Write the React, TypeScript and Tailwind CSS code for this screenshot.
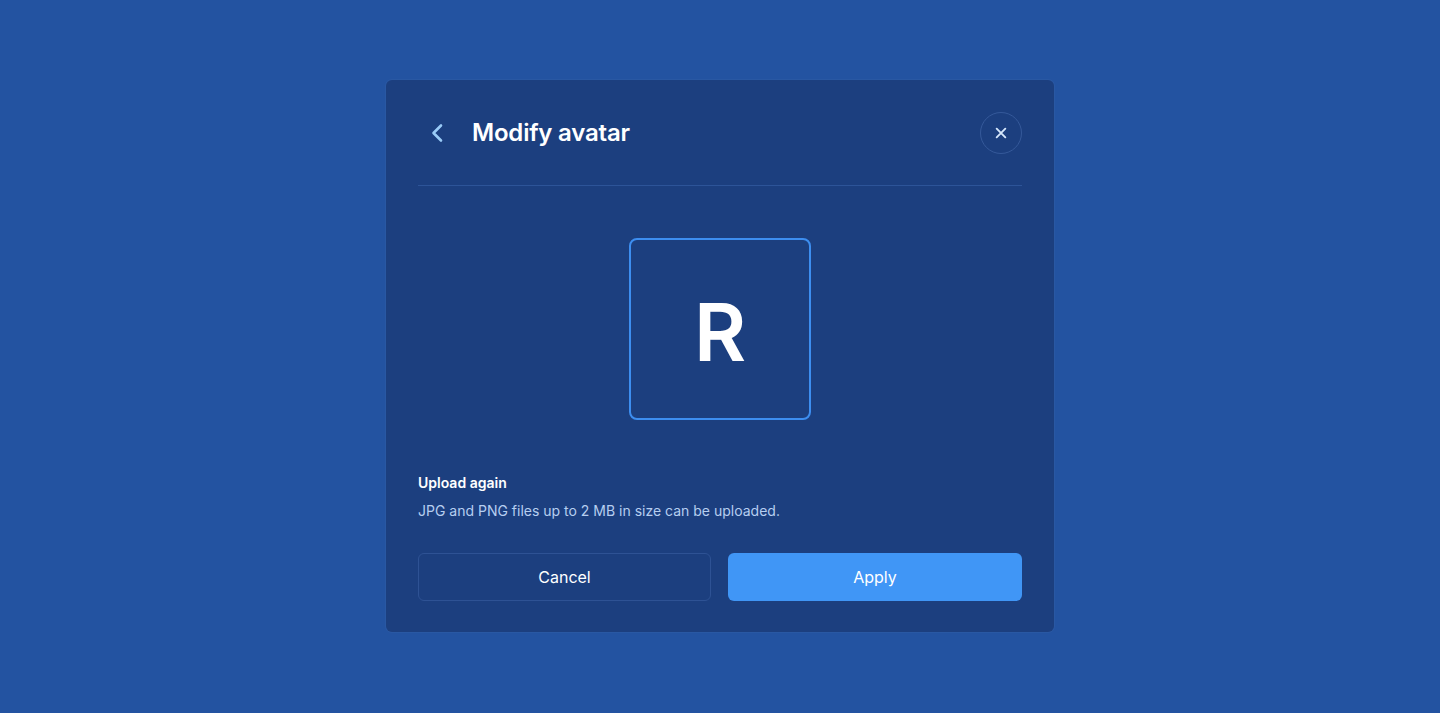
import React from "react";

export default function App() {
  return (
    <div className="w-[1440px] h-[713px] bg-[#2353a1] flex items-start justify-center pt-[80px]" style={{ fontFamily: "Inter, 'Noto Sans', sans-serif" }}>
      <div className="w-[668px] h-[552px] rounded-[6px] bg-[#1c3f7f] px-[32px] pt-[32px] pb-[31px] flex flex-col shadow-[0_0_0_1px_rgba(255,255,255,0.03)]">
        <div className="flex items-center justify-between h-[42px] shrink-0">
          <div className="flex items-center">
            <button className="w-[38px] h-[38px] flex items-center justify-center text-[#9acbf7]">
              <svg width="14" height="20" viewBox="0 0 14 20" fill="none" stroke="currentColor" strokeWidth="2.6" strokeLinecap="round" strokeLinejoin="round">
                <path d="M11 2.5L3.5 10l7.5 7.5" />
              </svg>
            </button>
            <h1 className="ml-[16px] text-[24px] font-semibold text-white tracking-[-0.2px]">Modify avatar</h1>
          </div>
          <button className="w-[42px] h-[42px] rounded-full border border-[#35599a] flex items-center justify-center text-[#d5e7fc]">
            <svg width="16" height="16" viewBox="0 0 24 24" fill="none" stroke="currentColor" strokeWidth="2.8" strokeLinecap="round">
              <path d="M5.5 5.5l13 13M18.5 5.5l-13 13" />
            </svg>
          </button>
        </div>
        <div className="mt-[31px] shrink-0 border-t border-[#2d5498]" />
        <div className="mt-[52px] flex justify-center shrink-0">
          <div className="w-[182px] h-[182px] rounded-[8px] border-2 border-[#3d8ef0] flex items-center justify-center">
            <span className="text-[80px] font-semibold text-white leading-none mt-[6px]">R</span>
          </div>
        </div>
        <div className="mt-[53px] text-[14px] font-semibold text-white leading-[20px]">Upload again</div>
        <div className="mt-[8px] text-[14px] text-[#b6cef0] leading-[20px]">JPG and PNG files up to 2 MB in size can be uploaded.</div>
        <div className="mt-[32px] flex gap-[17px]">
          <button className="w-[293px] h-[48px] rounded-[6px] border border-[#2e5294] text-white text-[16px]">Cancel</button>
          <button className="flex-1 h-[48px] rounded-[6px] bg-[#4096f6] text-white text-[16px]">Apply</button>
        </div>
      </div>
    </div>
  );
}
